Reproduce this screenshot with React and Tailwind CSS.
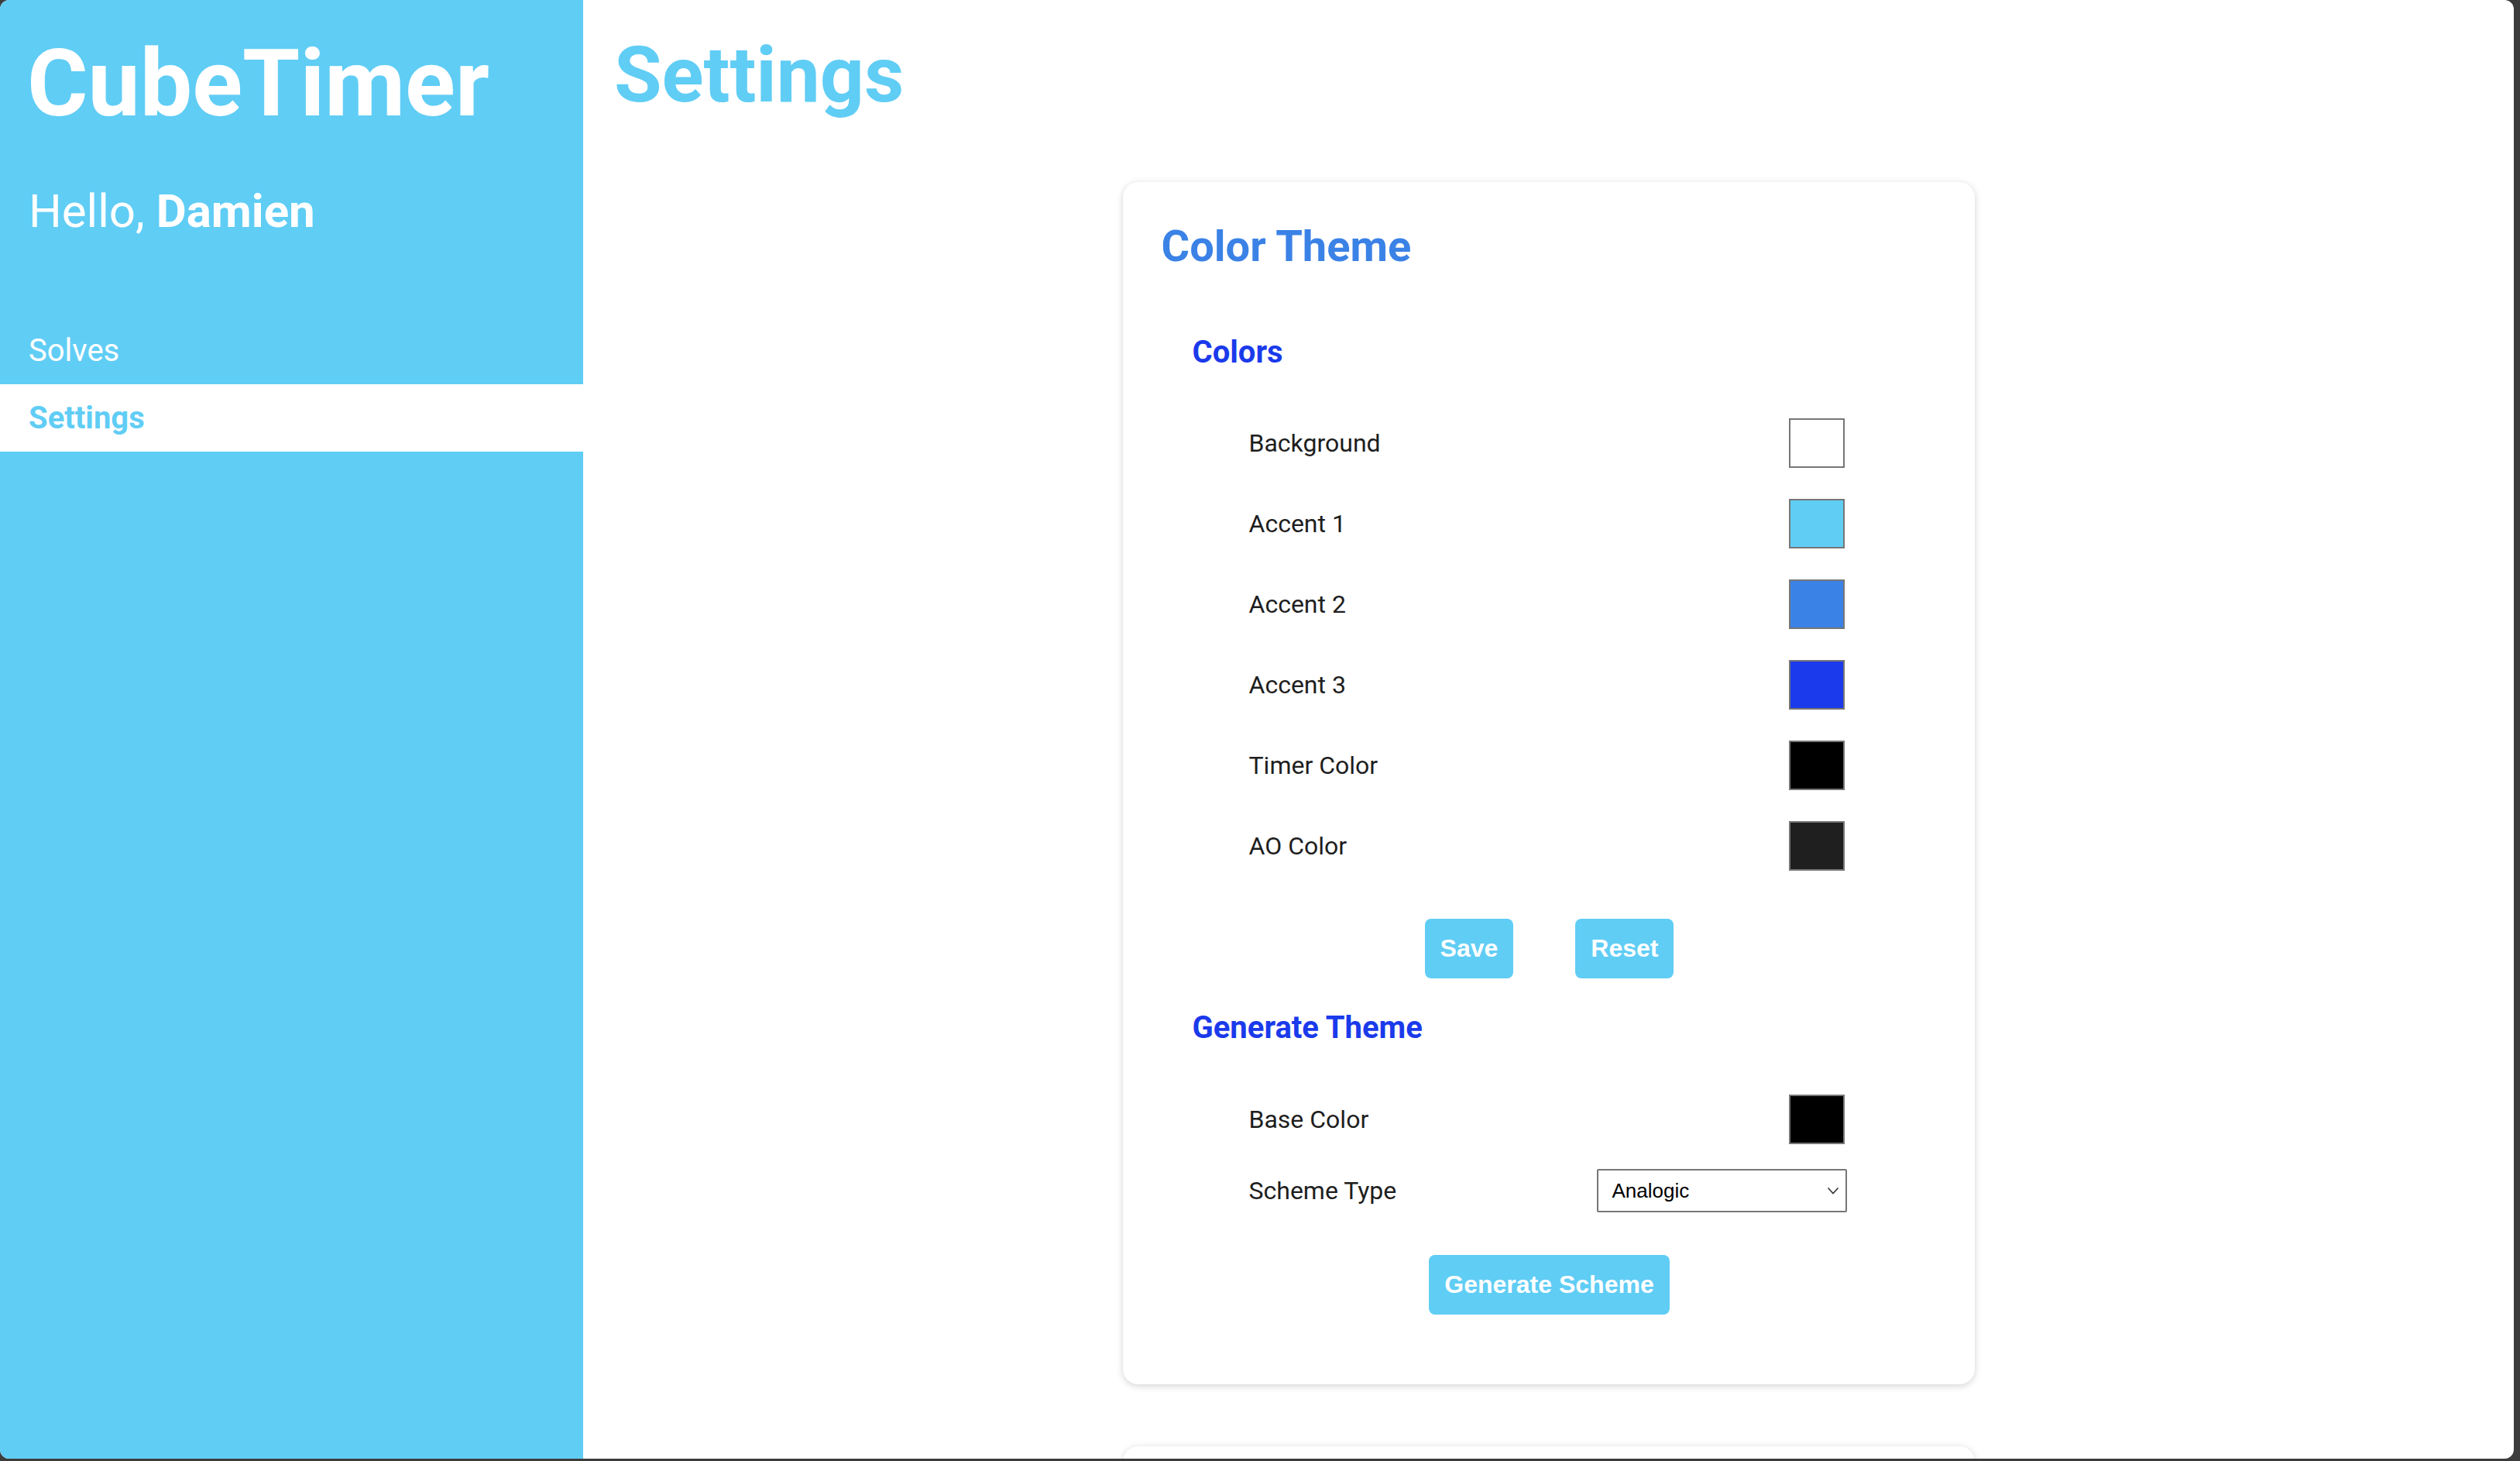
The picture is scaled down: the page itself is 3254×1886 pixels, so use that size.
import React from "react";

const rows = [
  { label: "Background", color: "bg-white" },
  { label: "Accent 1", color: "bg-[#60cdf5]" },
  { label: "Accent 2", color: "bg-[#3b82e6]" },
  { label: "Accent 3", color: "bg-[#1a3aeb]" },
  { label: "Timer Color", color: "bg-black" },
  { label: "AO Color", color: "bg-[#1f1f1f]" },
];

function Swatch({ color }) {
  return <div className={`w-[72px] h-[64px] border-2 border-[#767676] ${color}`} />;
}

function Row({ label, children, h = "h-[64px]" }) {
  return (
    <div className={`flex items-center justify-between ${h}`}>
      <span className="text-[32px] leading-[38px] text-[#1e1e1e]">{label}</span>
      {children}
    </div>
  );
}

function Btn({ children }) {
  return (
    <button className="bg-[#60cdf5] text-white font-bold text-[32px] leading-[37px] px-[20px] py-[20px] rounded-[8px] font-['Liberation_Sans',Arial,sans-serif]">
      {children}
    </button>
  );
}

export default function App() {
  return (
    <div className="w-[3254px] h-[1886px] bg-[#3c3c3c] overflow-hidden font-['Roboto',sans-serif]">
      <div className="w-[3246px] h-[1883px] rounded-[12px] overflow-hidden bg-white flex">
        <aside className="w-[753px] shrink-0 bg-[#60cdf5] flex flex-col pt-[38px]">
          <h1 className="text-[120px] leading-[141px] font-bold text-white pl-[35px]">CubeTimer</h1>
          <p className="mt-[59px] text-[60px] leading-[70px] text-white pl-[37px]">
            Hello, <span className="font-bold">Damien</span>
          </p>
          <nav className="mt-[101px] flex flex-col">
            <div className="px-[37px] py-[20px] text-[40px] leading-[47px] text-white">Solves</div>
            <div className="px-[37px] py-[20px] text-[40px] leading-[47px] bg-white text-[#60cdf5] font-bold">Settings</div>
          </nav>
        </aside>
        <main className="flex-1 flex flex-col pt-[38px] overflow-hidden">
          <h1 className="pl-[40px] text-[100px] leading-[117px] font-bold text-[#60cdf5]">Settings</h1>
          <div className="mt-[80px] flex flex-col items-center gap-[80px]">
            <section className="w-[1100px] shrink-0 rounded-[20px] bg-white shadow-[0_2px_10px_rgba(0,0,0,0.18)] pl-[50px] pr-[48px] pt-[50px] pb-[90px]">
              <h2 className="text-[56px] leading-[66px] font-bold text-[#3b82e6]">Color Theme</h2>
              <h3 className="mt-[80px] pl-[40px] text-[40px] leading-[47px] font-bold text-[#1a3aeb]">Colors</h3>
              <div className="mt-[62px] pl-[113px] pr-[120px] flex flex-col gap-[40px]">
                {rows.map((r) => (
                  <Row key={r.label} label={r.label}>
                    <Swatch color={r.color} />
                  </Row>
                ))}
              </div>
              <div className="mt-[62px] flex justify-center gap-[80px]">
                <Btn>Save</Btn>
                <Btn>Reset</Btn>
              </div>
              <h3 className="mt-[40px] pl-[40px] text-[40px] leading-[47px] font-bold text-[#1a3aeb]">Generate Theme</h3>
              <div className="mt-[63px] pl-[113px] pr-[120px] flex flex-col">
                <Row label="Base Color">
                  <Swatch color="bg-black" />
                </Row>
                <div className="mt-[32px]">
                  <Row label="Scheme Type" h="h-[56px]">
                    <div className="mr-[-3px] w-[323px] h-[56px] border-2 border-[#767676] rounded-[2px] bg-white flex items-center justify-between pl-[18px] pr-[8px] font-['Liberation_Sans',Arial,sans-serif] text-[26px] text-black">
                      <span>Analogic</span>
                      <svg width="16" height="10" viewBox="0 0 16 10" fill="none">
                        <path d="M1.5 1.5 L8 8.5 L14.5 1.5" stroke="#333" strokeWidth="1.6" />
                      </svg>
                    </div>
                  </Row>
                </div>
              </div>
              <div className="mt-[55px] flex justify-center">
                <Btn>Generate Scheme</Btn>
              </div>
            </section>
            <section className="w-[1100px] h-[600px] shrink-0 rounded-[20px] bg-white shadow-[0_2px_10px_rgba(0,0,0,0.18)]" />
          </div>
        </main>
      </div>
    </div>
  );
}
